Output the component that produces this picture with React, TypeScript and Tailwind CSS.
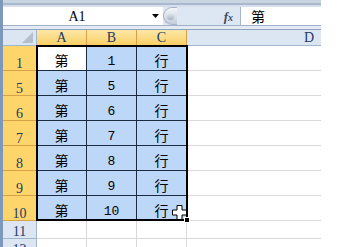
import React from "react";

const mono = { fontFamily: '"Liberation Mono", monospace' };
const serif = { fontFamily: '"Liberation Serif", serif' };
const cjk = { fontFamily: '"Noto Sans CJK SC", sans-serif' };

const rows = [
  { n: "1", v: "1" },
  { n: "5", v: "5" },
  { n: "6", v: "6" },
  { n: "7", v: "7" },
  { n: "8", v: "8" },
  { n: "9", v: "9" },
  { n: "10", v: "10" },
];

function RowHead({ n, sel, h }: { n: string; sel: boolean; h: string }) {
  return (
    <div
      className={`w-[34px] ${h} shrink-0 flex items-end justify-center border-b border-r text-[14px] leading-[12px] text-[#233a66] ${
        sel ? "bg-[#fdd56a] border-[#d9a24a]" : "bg-[#dce6f2] border-[#9eb6ce]"
      }`}
      style={serif}
    >
      {n}
    </div>
  );
}

export default function App() {
  return (
    <div className="w-[348px] h-[247px] bg-white flex overflow-hidden">
      <div className="w-[3px] shrink-0 bg-[#7d98bb]" />
      <div className="w-[318px] shrink-0 flex flex-col">
        {/* top bars */}
        <div className="h-[3px] shrink-0 bg-[#c9d4e1]" />
        <div className="h-[2px] shrink-0 bg-[#a9b9cd]" />
        <div className="h-[2px] shrink-0 bg-[#d5deea]" />
        {/* formula bar */}
        <div className="h-[18px] shrink-0 flex bg-[#dde7f3]">
          <div className="w-[160px] bg-white flex items-center">
            <div className="flex-1 text-center text-[14px] text-black pl-[4px]" style={serif}>
              A1
            </div>
            <div className="w-[16px] flex items-center justify-center">
              <svg width="7" height="4" viewBox="0 0 7 4">
                <path d="M0 0 H7 L3.5 4 Z" fill="#000" />
              </svg>
            </div>
          </div>
          <div className="w-[14px] h-[18px] rounded-l-full bg-gradient-to-b from-[#f4f6f9] to-[#c3cdd9] border border-r-0 border-[#a6b3c3] flex items-center justify-center">
            <div className="w-[7px] h-[7px] rounded-full bg-gradient-to-b from-[#e8ecf1] to-[#a7b2c0]" />
          </div>
          <div className="flex-1 flex items-center justify-end pr-[7px]">
            <span className="text-[13px] italic font-bold text-[#3c4b60] leading-none" style={serif}>
              f<span className="text-[10px]">x</span>
            </span>
          </div>
          <div
            className="w-[81px] bg-white border-l border-[#a7b6c9] flex items-center pl-[10px] text-[14px] text-black"
            style={cjk}
          >
            第
          </div>
        </div>
        <div className="h-[1px] shrink-0 bg-[#a3b3c7]" />
        <div className="h-[3px] shrink-0 bg-[#e3eaf3]" />
        {/* column headers */}
        <div className="h-[17px] shrink-0 flex border-t border-[#8ea4bf] text-[14px] text-[#233a66]" style={serif}>
          <div className="w-[34px] bg-[#dce6f2] border-r border-b border-[#9eb6ce] relative">
            <svg className="absolute right-[3px] bottom-[2px]" width="11" height="11" viewBox="0 0 11 11">
              <path d="M11 0 V11 H0 Z" fill="#b3bfcd" />
            </svg>
          </div>
          {["A", "B", "C"].map((c) => (
            <div
              key={c}
              className="w-[50px] flex items-center justify-center bg-gradient-to-b from-[#fde7a6] to-[#f9d064] border-r border-b border-[#d9a24a]"
            >
              {c}
            </div>
          ))}
          <div className="flex-1 flex items-center justify-end pr-[7px] bg-[#dce6f2] border-b border-[#9eb6ce]">
            D
          </div>
        </div>
        {/* body */}
        <div className="relative shrink-0 flex flex-col">
          {rows.map((r, i) => (
            <div key={r.n} className="flex h-[25px]">
              <RowHead n={r.n} sel h="h-[25px]" />
              <div
                className={`w-[50px] flex items-end justify-center pb-[3px] border-r border-b border-[#1b2b42] text-[14px] leading-[14px] ${
                  i === 0 ? "bg-white" : "bg-[#bcd7f7]"
                }`}
                style={cjk}
              >
                第
              </div>
              <div
                className="w-[50px] flex items-end justify-center pb-[1px] border-r border-b border-[#1b2b42] bg-[#bcd7f7] text-[13px] leading-[14px]"
                style={mono}
              >
                {r.v}
              </div>
              <div
                className="w-[50px] flex items-end justify-center pb-[3px] border-r border-b border-[#1b2b42] bg-[#bcd7f7] text-[14px] leading-[14px]"
                style={cjk}
              >
                行
              </div>
              <div className="flex-1 border-b border-[#d9d9d9]" />
            </div>
          ))}
          {[0, 1].map((k) => (
            <div key={k} className="flex h-[18px]">
              <RowHead n={k === 0 ? "11" : "12"} sel={false} h="h-[18px]" />
              <div className="w-[50px] border-r border-b border-[#d9d9d9]" />
              <div className="w-[50px] border-r border-b border-[#d9d9d9]" />
              <div className="w-[50px] border-r border-b border-[#d9d9d9]" />
              <div className="flex-1 border-b border-[#d9d9d9]" />
            </div>
          ))}
          {/* selection border */}
          <div className="absolute left-[33px] top-[-1px] w-[152px] h-[176px] border-2 border-black pointer-events-none">
            <div className="absolute right-[-4px] bottom-[-4px] w-[6px] h-[6px] bg-black border border-white" />
          </div>
          {/* cursor */}
          <svg className="absolute left-[169px] top-[159px]" width="15" height="15" viewBox="0 0 15 15">
            <path
              d="M5 0.5 H10 V5 H14.5 V10 H10 V14.5 H5 V10 H0.5 V5 H5 Z"
              fill="#fff"
              stroke="#000"
              strokeWidth="1"
            />
          </svg>
        </div>
      </div>
      <div className="flex-1 bg-white" />
    </div>
  );
}
